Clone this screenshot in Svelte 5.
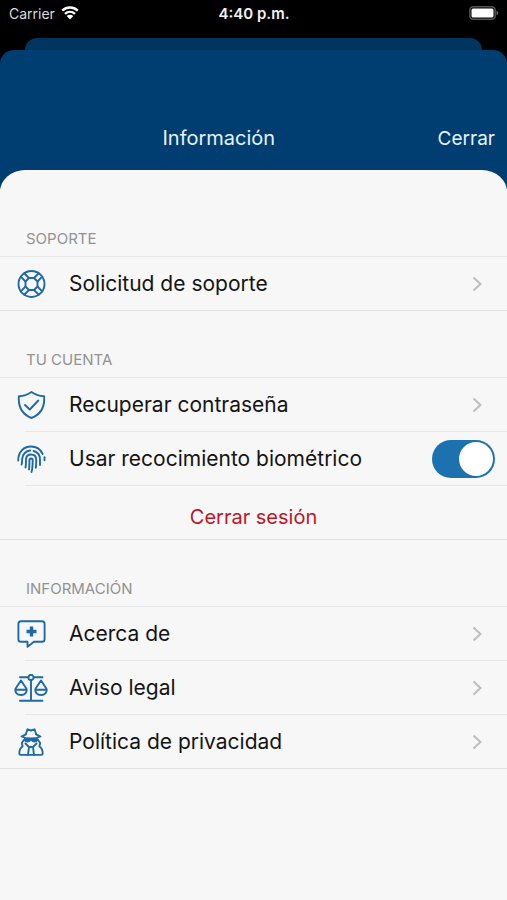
<script>
  let biometric = true;

  const support = [{ icon: 'ring', label: 'Solicitud de soporte', href: '#soporte' }];
  const account = [{ icon: 'shield', label: 'Recuperar contraseña', href: '#contrasena' }];
  const info = [
    { icon: 'about', label: 'Acerca de', href: '#acerca' },
    { icon: 'scales', label: 'Aviso legal', href: '#aviso' },
    { icon: 'spy', label: 'Política de privacidad', href: '#privacidad' }
  ];

  const sections = [
    { title: 'Soporte', rows: support },
    { title: 'Tu cuenta', rows: account, session: true },
    { title: 'Información', rows: info }
  ];

  // Stroke paths on a 34x28 grid
  const icons = {
    ring: [
      'M17.500 1a13 13 0 1 0 0 26a13 13 0 1 0 0-26z',
      'M15 8h5l3.500 3.500v5l-3.500 3.500h-5l-3.500-3.500v-5z',
      'M10.200 3.300l4.800 4.700M6.800 6.700l4.700 4.800M24.800 3.300l-4.800 4.700M28.200 6.700l-4.700 4.800',
      'M10.200 24.700l4.800-4.700M6.800 21.300l4.700-4.800M24.800 24.700l-4.800-4.700M28.200 21.300l-4.700-4.800'
    ],
    shield: [
      'M17.500 1c3.800 2.600 7.800 4 12.600 4.200C30.900 15.400 27.300 23.200 17.500 27C7.700 23.200 4.100 15.400 4.900 5.200C9.700 5 13.700 3.600 17.500 1z',
      'M11 14l4.800 4.500l8.500-9'
    ],
    finger: [
      'M4.200 15.500c0-8.500 5.300-14 12.800-14c5.300 0 9.600 2.800 11.700 7.500',
      'M30.500 12.300v3',
      'M7.600 19.500c.6-2 .4-3.800.6-5.700c.4-4.700 3.800-8 8-8.300',
      'M19.500 6c4 1 6.500 4.200 6.500 8.500v5.500',
      'M11.500 22.500c.7-2.500.3-5 .5-8c.2-3 2.300-5 5-5c3 0 5.200 2 5.200 5.300c0 2.700.2 5-.4 8',
      'M15 24.500c.6-3 .3-6 .4-9.300c.1-2.300 3.300-2.300 3.300 0c0 4.500 0 8-1.200 11.800'
    ],
    about: [
      'M7 1.200h21a2.600 2.600 0 0 1 2.600 2.600v15.400a2.600 2.600 0 0 1-2.600 2.600H20L13.500 26.800v-5H7a2.600 2.600 0 0 1-2.600-2.600V3.800a2.600 2.600 0 0 1 2.600-2.600z'
    ],
    scales: [
      'M6 3.300h8.300M19.700 3.300H28.500M17 6v20.500M6 26.800h22.500',
      'M17 .8a2.600 2.600 0 1 0 0 5.200a2.600 2.600 0 1 0 0-5.200z',
      'M7 6.500L1.800 14.200C.2 18 3.200 21 7 21s6.800-3 5.200-6.800zM1.300 15.800h11.400',
      'M27 6.500l-5.200 7.700C20.200 18 23.200 21 27 21s6.800-3 5.200-6.800zM21.300 15.800h11.400'
    ],
    spy: [
      'M11.800 6.300L13.500 1.300l3.500 1.200l3.500-1.200l1.700 5',
      'M11.800 6.300L7.500 8.500c5.500 2.600 13.500 2.600 19 0l-4.300-2.200',
      'M10.300 11.500l-2.500 3.500l.8 3.500c-2 1.200-3.300 3.500-3.300 7c0 .8.500 1.400 1.300 1.400h20.800c.8 0 1.300-.6 1.300-1.400c0-3.500-1.300-5.800-3.300-7l.8-3.500l-2.500-3.500',
      'M11.500 15.500l3.500 3.500l-1 8M22.500 15.500L19 19l1 8M15 19h4'
    ]
  };
</script>

{#snippet glyph(name)}
  <svg class="icon" viewBox="0 0 34 28" aria-hidden="true">
    {#each icons[name] as d}
      <path {d} />
    {/each}
    {#if name === 'about'}
      <path class="plus" d="M17.500 6.500v10M12.500 11.500h10" />
    {/if}
    {#if name === 'spy'}
      <path class="solid" d="M10 10c4.500 1 9.500 1 14 0v2.500c-1.500 2.500-5 2.500-7 .3c-2 2.200-5.500 2.200-7-.3z" />
    {/if}
  </svg>
{/snippet}

<div class="screen">
  <div class="status">
    <div class="carrier">
      <span>Carrier</span>
      <svg class="wifi" viewBox="0 0 18 14" aria-hidden="true">
        <path d="M1.200 4.700c4.400-4.200 11.200-4.200 15.600 0M4 7.900c2.900-2.700 7.100-2.700 10 0" />
        <path class="dot" d="M5.700 10.100c1.900-1.700 4.700-1.700 6.600 0L9 13.500z" />
      </svg>
    </div>
    <time>4:40 p.m.</time>
    <svg class="battery" viewBox="0 0 30 14" aria-hidden="true">
      <rect class="case" x="0.800" y="0.800" width="25.400" height="12.400" rx="3.500" />
      <rect class="charge" x="2.500" y="2.500" width="22" height="9" rx="1.500" />
      <path class="tip" d="M27.500 4.800c2.300.8 2.300 3.600 0 4.400z" />
    </svg>
  </div>

  <div class="back-card"></div>

  <div class="card">
    <header>
      <h1>Información</h1>
      <button class="close" type="button">Cerrar</button>
    </header>

    <main>
      {#each sections as section}
        <section>
          <h2>{section.title}</h2>
          <ul>
            {#each section.rows as row}
              <li>
                <a class="row" href={row.href}>
                  {@render glyph(row.icon)}
                  <span class="label">{row.label}</span>
                  <svg class="chevron" viewBox="0 0 10 16" aria-hidden="true">
                    <path d="M1.500 1.500L8.500 8l-7 6.500" />
                  </svg>
                </a>
              </li>
            {/each}
            {#if section.session}
              <li>
                <label class="row toggle-row">
                  {@render glyph('finger')}
                  <span class="label">Usar recocimiento biométrico</span>
                  <input class="switch" type="checkbox" role="switch" bind:checked={biometric} />
                </label>
              </li>
              <li>
                <button class="logout" type="button">Cerrar sesión</button>
              </li>
            {/if}
          </ul>
        </section>
      {/each}
    </main>
  </div>
</div>

<style>
  :global(body) {
    background: #000;
  }

  .screen {
    display: flex;
    flex-direction: column;
    min-height: 100vh;
    font-family: Inter, "Liberation Sans", sans-serif;
    background: #000;
    color: #141414;
  }

  .status {
    display: grid;
    grid-template-columns: 1fr auto 1fr;
    align-items: center;
    height: 26px;
    padding: 0 8px 0 9px;
    margin-bottom: 12px;
    color: #f2f2f2;
    font-size: 15px;
  }

  .carrier {
    display: flex;
    align-items: center;
    gap: 6px;
    color: #dcdcdc;
    font-size: 14px;
  }

  .wifi {
    width: 18px;
    height: 14px;
    fill: none;
    stroke: #fff;
    stroke-width: 2.4;
  }

  .wifi .dot {
    fill: #fff;
    stroke: none;
  }

  time {
    font-weight: 600;
  }

  .battery {
    justify-self: end;
    width: 30px;
    height: 14px;
  }

  .case {
    fill: none;
    stroke: #555;
    stroke-width: 1.5;
  }

  .charge {
    fill: #fff;
  }

  .tip {
    fill: #666;
  }

  .back-card {
    height: 12px;
    margin: 0 25px;
    border-radius: 12px 12px 0 0;
    background: #003560;
  }

  .card {
    display: flex;
    flex: 1;
    flex-direction: column;
    border-radius: 14px 14px 0 0;
    background: linear-gradient(#003e71 139px, #f7f7f7 139px);
  }

  header {
    display: flex;
    align-items: center;
    height: 56px;
    padding: 60px 12px 4px 0;
    color: #e9f2fa;
  }

  h1 {
    flex: 1;
    margin: 0;
    font-size: 20px;
    font-weight: 400;
    text-align: center;
  }

  button {
    border: 0;
    background: none;
    font-family: inherit;
    cursor: pointer;
  }

  .close {
    padding: 0;
    color: inherit;
    font-size: 19px;
  }

  main {
    flex: 1;
    padding-top: 20px;
    border-radius: 25px 25px 0 0 / 22px 22px 0 0;
    background: #f7f7f7;
  }

  h2 {
    margin: 0;
    padding: 39px 26px 7px;
    border-bottom: 1px solid #e6e6e6;
    color: #929292;
    font-size: 15px;
    font-weight: 400;
    line-height: 20px;
    text-transform: uppercase;
  }

  ul {
    margin: 0;
    padding: 0;
    list-style: none;
    border-bottom: 1px solid #e2e2e2;
  }

  li + li::before {
    content: "";
    display: block;
    height: 1px;
    margin-left: 25px;
    background: #e6e6e6;
  }

  .row {
    display: flex;
    align-items: center;
    height: 53px;
    padding: 0 25px 0 14px;
    color: inherit;
    text-decoration: none;
  }

  .toggle-row {
    padding-right: 12px;
  }

  .icon {
    flex: none;
    width: 34px;
    height: 28px;
    margin-right: 21px;
    fill: none;
    stroke: #1f69a5;
    stroke-width: 1.9;
    stroke-linecap: round;
    stroke-linejoin: round;
  }

  .plus {
    stroke-width: 3.4;
    stroke-linecap: butt;
  }

  .solid {
    fill: #1f69a5;
    stroke: none;
  }

  .label {
    flex: 1;
    font-size: 21px;
    line-height: 24px;
  }

  .chevron {
    width: 10px;
    height: 16px;
    fill: none;
    stroke: #bdbdbd;
    stroke-width: 2;
  }

  .switch {
    appearance: none;
    display: flex;
    width: 63px;
    height: 38px;
    margin: 0;
    padding: 2px;
    box-sizing: border-box;
    border-radius: 19px;
    background: #d5d5d5;
    cursor: pointer;
  }

  .switch::before {
    content: "";
    width: 34px;
    height: 34px;
    border-radius: 50%;
    background: #fff;
  }

  .switch:checked {
    justify-content: flex-end;
    background: #1b72ae;
  }

  .logout {
    width: 100%;
    height: 53px;
    padding: 8px 0 0;
    color: #bd1526;
    font-size: 20px;
  }
</style>
